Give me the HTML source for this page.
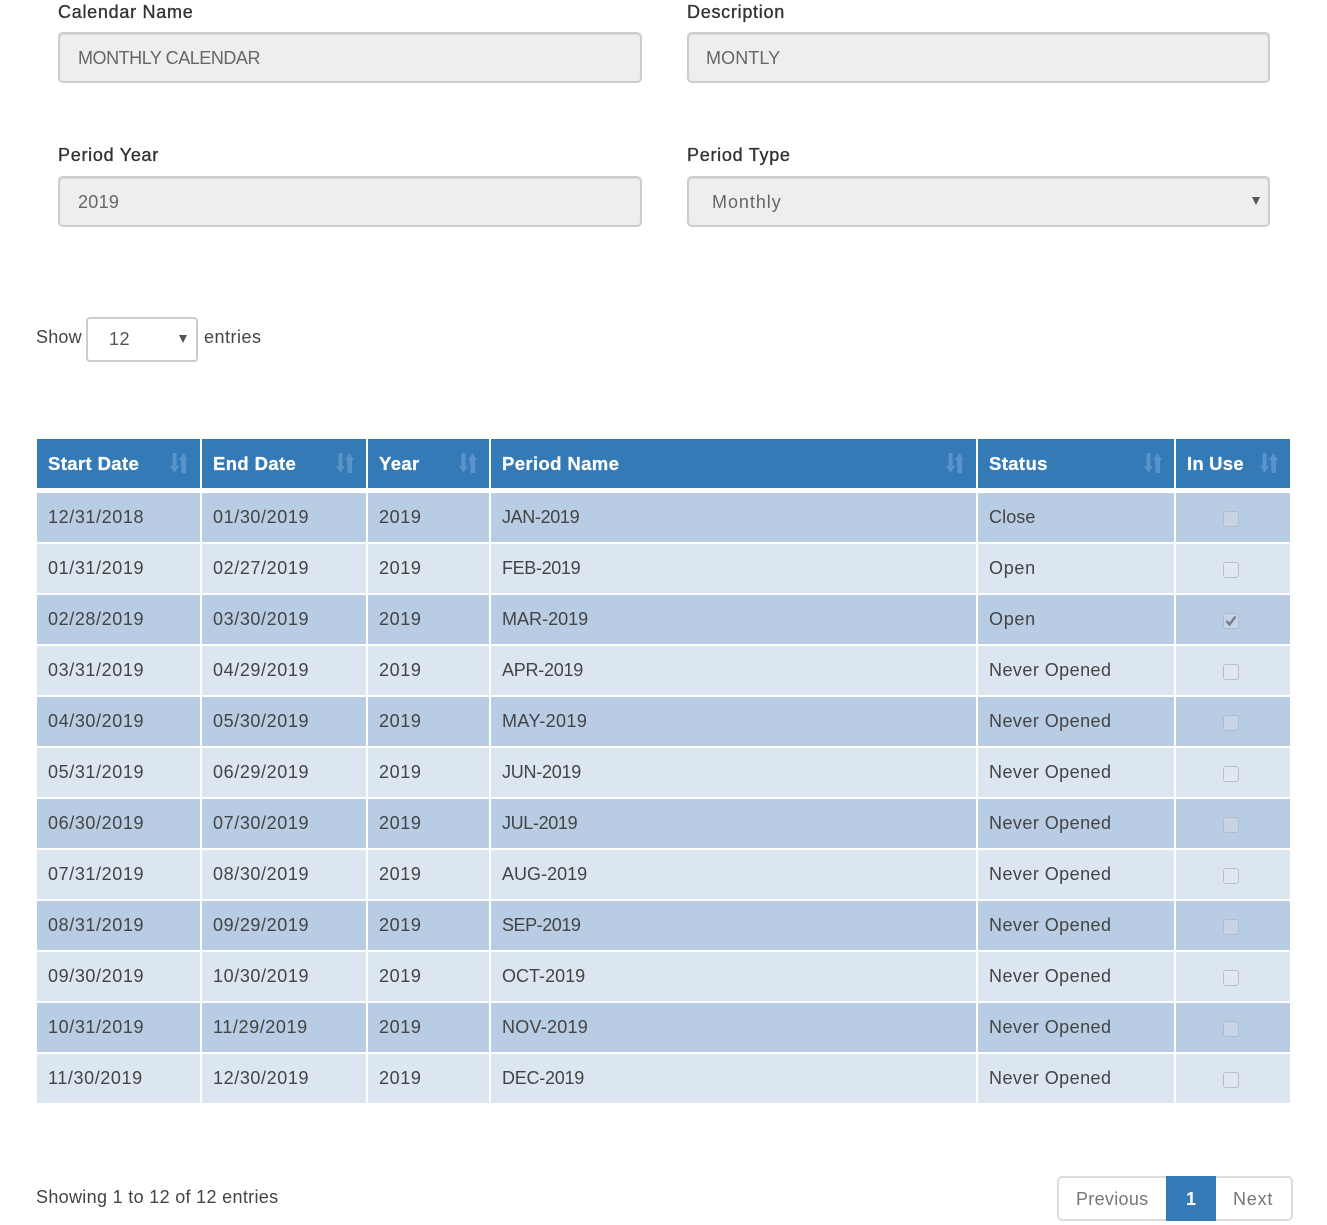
<!DOCTYPE html>
<html><head><meta charset="utf-8"><style>
html,body{margin:0;padding:0;background:#fff;width:1327px;height:1225px;overflow:hidden}
body{position:relative;font-family:"Liberation Sans",sans-serif;font-size:18px;color:#444}
.a{position:absolute;white-space:nowrap;line-height:24px}
.lab{color:#333;-webkit-text-stroke:.35px #333;letter-spacing:.72px}
.inp{position:absolute;box-sizing:border-box;width:584px;height:51px;background:#eee;border:2px solid #ccc;border-radius:5px;box-shadow:inset 0 1px 1px rgba(0,0,0,.075);color:#666;line-height:48px;padding-left:18px;letter-spacing:.1px}
.tri{position:absolute;width:0;height:0;border-left:4px solid transparent;border-right:4px solid transparent;border-top:8px solid #555}
table{position:absolute;left:37px;top:439px;border-collapse:separate;border-spacing:0;table-layout:fixed;width:1253px}
th,td{box-sizing:border-box;padding:0 0 0 11px;text-align:left;border-right:2px solid #fff;border-bottom:2px solid #fff;white-space:nowrap;overflow:hidden}
th:last-child,td:last-child{border-right:0}
th{height:54px;background:#337ab7;background-clip:padding-box;color:#fff;font-size:18.5px;letter-spacing:.38px;-webkit-text-stroke:.25px #fff;border-bottom:5px solid #fff;position:relative;font-weight:bold}
td{height:51px;background-clip:padding-box;letter-spacing:.6px;color:#444}
td:nth-child(4){letter-spacing:.02px}
td:nth-child(5){letter-spacing:.45px}
tbody tr:nth-child(odd) td{background-color:#b8cce4}
tbody tr:nth-child(even) td{background-color:#dce6f1}
tr:last-child td{border-bottom:0;height:49px}
th svg{position:absolute;top:14px;right:12px}
.c{display:block;box-sizing:border-box;width:16px;height:16px;margin:3px 0 0 36px;border:1px solid #b4b8c2;border-radius:3px;background:rgba(235,235,235,.3);position:relative;opacity:.85}
.c svg{position:absolute;left:1px;top:1px}
.pg{position:absolute;left:1057px;top:1176px;width:236px;height:45px;box-sizing:border-box;border:2px solid #ddd;border-radius:5px;background:#fff}
.p{position:absolute;color:#777;line-height:24px;letter-spacing:.3px;top:1187px}
</style></head><body>
<div class="a lab" style="left:58px;top:0px">Calendar Name</div>
<div class="a lab" style="left:687px;top:0px">Description</div>
<div class="inp" style="left:58px;top:32px;letter-spacing:-.46px">MONTHLY CALENDAR</div>
<div class="inp" style="left:687px;top:32px;width:583px;padding-left:17px">MONTLY</div>
<div class="a lab" style="left:58px;top:143px">Period Year</div>
<div class="a lab" style="left:687px;top:143px">Period Type</div>
<div class="inp" style="left:58px;top:176px;letter-spacing:.3px">2019</div>
<div class="inp" style="left:687px;top:176px;width:583px;padding-left:23px;letter-spacing:.95px">Monthly</div>
<div class="tri" style="left:1252px;top:197px"></div>

<div class="a" style="left:36px;top:325px;letter-spacing:.2px">Show</div>
<div style="position:absolute;left:86px;top:317px;width:112px;height:45px;box-sizing:border-box;border:2px solid #ccc;border-radius:4px;background:#fff"></div>
<div class="a" style="left:109px;top:327px;color:#555;letter-spacing:.5px">12</div>
<div class="tri" style="left:179px;top:335px"></div>
<div class="a" style="left:204px;top:325px;letter-spacing:.5px">entries</div>

<table>
<colgroup><col style="width:165px"><col style="width:166px"><col style="width:123px"><col style="width:487px"><col style="width:198px"><col style="width:114px"></colgroup>
<thead><tr>
<th>Start Date<svg width="18" height="20" viewBox="0 0 18 20"><path d="M2.500 0h4v13H9l-4.500 7L0 13h2.500zM11 7H9l4.500-7L18 7h-2v13h-4.500z" fill="#5a93c9"/></svg></th>
<th>End Date<svg width="18" height="20" viewBox="0 0 18 20"><path d="M2.500 0h4v13H9l-4.500 7L0 13h2.500zM11 7H9l4.500-7L18 7h-2v13h-4.500z" fill="#5a93c9"/></svg></th>
<th>Year<svg width="18" height="20" viewBox="0 0 18 20"><path d="M2.500 0h4v13H9l-4.500 7L0 13h2.500zM11 7H9l4.500-7L18 7h-2v13h-4.500z" fill="#5a93c9"/></svg></th>
<th>Period Name<svg width="18" height="20" viewBox="0 0 18 20"><path d="M2.500 0h4v13H9l-4.500 7L0 13h2.500zM11 7H9l4.500-7L18 7h-2v13h-4.500z" fill="#5a93c9"/></svg></th>
<th>Status<svg width="18" height="20" viewBox="0 0 18 20"><path d="M2.500 0h4v13H9l-4.500 7L0 13h2.500zM11 7H9l4.500-7L18 7h-2v13h-4.500z" fill="#5a93c9"/></svg></th>
<th style="letter-spacing:.2px">In Use<svg width="18" height="20" viewBox="0 0 18 20"><path d="M2.500 0h4v13H9l-4.500 7L0 13h2.500zM11 7H9l4.500-7L18 7h-2v13h-4.500z" fill="#5a93c9"/></svg></th>
</tr></thead>
<tbody>
<tr><td>12/31/2018</td><td>01/30/2019</td><td>2019</td><td style="letter-spacing:-.35px">JAN-2019</td><td style="letter-spacing:.1px">Close</td><td><span class="c"></span></td></tr>
<tr><td>01/31/2019</td><td>02/27/2019</td><td>2019</td><td style="letter-spacing:-.35px">FEB-2019</td><td style="letter-spacing:.7px">Open</td><td><span class="c"></span></td></tr>
<tr><td>02/28/2019</td><td>03/30/2019</td><td>2019</td><td>MAR-2019</td><td style="letter-spacing:.7px">Open</td><td><span class="c"><svg width="12" height="12" viewBox="0 0 12 12"><path d="M1.500 6l3 3.500 6-8" fill="none" stroke="#6b6f78" stroke-width="2.400"/></svg></span></td></tr>
<tr><td>03/31/2019</td><td>04/29/2019</td><td>2019</td><td style="letter-spacing:-.25px">APR-2019</td><td>Never Opened</td><td><span class="c"></span></td></tr>
<tr><td>04/30/2019</td><td>05/30/2019</td><td>2019</td><td style="letter-spacing:.4px">MAY-2019</td><td>Never Opened</td><td><span class="c"></span></td></tr>
<tr><td>05/31/2019</td><td>06/29/2019</td><td>2019</td><td style="letter-spacing:-.25px">JUN-2019</td><td>Never Opened</td><td><span class="c"></span></td></tr>
<tr><td>06/30/2019</td><td>07/30/2019</td><td>2019</td><td style="letter-spacing:-.35px">JUL-2019</td><td>Never Opened</td><td><span class="c"></span></td></tr>
<tr><td>07/31/2019</td><td>08/30/2019</td><td>2019</td><td>AUG-2019</td><td>Never Opened</td><td><span class="c"></span></td></tr>
<tr><td>08/31/2019</td><td>09/29/2019</td><td>2019</td><td style="letter-spacing:-.45px">SEP-2019</td><td>Never Opened</td><td><span class="c"></span></td></tr>
<tr><td>09/30/2019</td><td>10/30/2019</td><td>2019</td><td>OCT-2019</td><td>Never Opened</td><td><span class="c"></span></td></tr>
<tr><td>10/31/2019</td><td>11/29/2019</td><td>2019</td><td style="letter-spacing:.25px">NOV-2019</td><td>Never Opened</td><td><span class="c"></span></td></tr>
<tr><td>11/30/2019</td><td>12/30/2019</td><td>2019</td><td style="letter-spacing:-.25px">DEC-2019</td><td>Never Opened</td><td><span class="c"></span></td></tr>
</tbody>
</table>

<div class="a" style="left:36px;top:1185px;letter-spacing:.32px">Showing 1 to 12 of 12 entries</div>
<div class="pg"></div>
<div style="position:absolute;left:1166px;top:1176px;width:50px;height:45px;background:#337ab7"></div>
<div class="p" style="left:1076px">Previous</div>
<div class="p" style="left:1186px;color:#fff;font-weight:bold">1</div>
<div class="p" style="left:1233px;letter-spacing:.8px">Next</div>
</body></html>
